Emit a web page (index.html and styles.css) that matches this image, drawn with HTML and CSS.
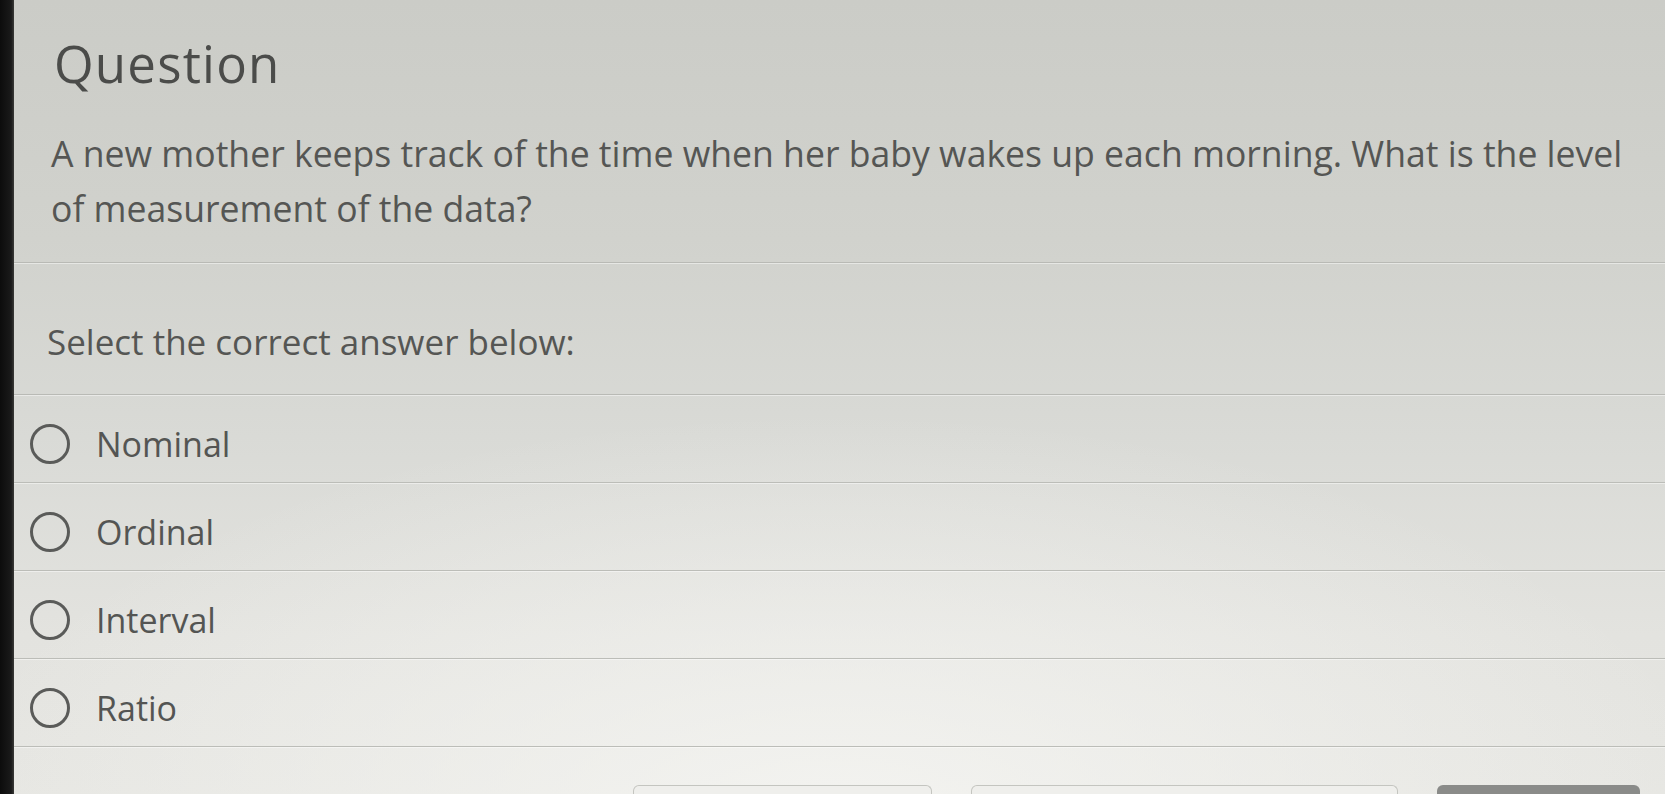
FILE: index.html
```html
<!DOCTYPE html>
<html lang="en">
<head>
<meta charset="utf-8">
<title>Question</title>
<link rel="stylesheet" href="styles.css">
</head>
<body>
<div class="screen">
  <div class="bezel"></div>
  <main class="page">
    <header class="q-head">
      <h1 class="title">Question</h1>
      <p class="prompt">A new mother keeps track of the time when her baby wakes up each morning. What is the level of measurement of the data?</p>
    </header>
    <div class="instr">Select the correct answer below:</div>
    <ul class="options">
      <li class="option"><span class="radio"></span><span class="label">Nominal</span></li>
      <li class="option"><span class="radio"></span><span class="label">Ordinal</span></li>
      <li class="option"><span class="radio"></span><span class="label">Interval</span></li>
      <li class="option"><span class="radio"></span><span class="label">Ratio</span></li>
    </ul>
    <div class="actions">
      <div class="btn btn-light btn-a"></div>
      <div class="btn btn-light btn-b"></div>
      <div class="btn btn-dark btn-c"></div>
    </div>
  </main>
</div>
</body>
</html>
```
FILE: styles.css
```css
html, body {
  margin: 0;
  padding: 0;
  height: 794px;
  overflow: hidden;
}
body {
  font-family: "Open Sans", "Noto Sans", "Liberation Sans", sans-serif;
  color: #555654;
  background: #d6d7d2;
}
.screen {
  display: flex;
  height: 794px;
  background:
    radial-gradient(ellipse 900px 420px at 50% 105%, rgba(245,245,242,0.9), rgba(245,245,242,0) 100%),
    linear-gradient(180deg, #cbccc7 0%, #d1d2cd 30%, #d9dad6 55%, #e3e3df 80%, #e6e6e2 100%);
}
.bezel {
  width: 14px;
  flex: 0 0 14px;
  background: linear-gradient(90deg, #0c0c0c 0%, #1a1a1a 80%, #3a3a38 100%);
}
.page {
  flex: 1;
  min-width: 0;
}
.q-head {
  padding: 33px 20px 26px 37px;
  border-bottom: 1px solid #b9bab5;
  box-shadow: 0 1px 0 rgba(255,255,255,0.45);
}
.title {
  margin: 0 0 0 3px;
  font-size: 51px;
  line-height: 60px;
  font-weight: 400;
  letter-spacing: 1.2px;
  color: #4b4c4a;
}
.prompt {
  margin: 33px 0 0 0;
  font-size: 35.6px;
  line-height: 55px;
  color: #555654;
}
.instr {
  padding: 51px 20px 25px 33px;
  font-size: 35px;
  line-height: 55px;
  border-bottom: 1px solid #b9bab5;
  box-shadow: 0 1px 0 rgba(255,255,255,0.45);
}
.options {
  list-style: none;
  margin: 0;
  padding: 0;
}
.option {
  box-sizing: border-box;
  height: 88px;
  padding: 10px 0 0 16px;
  display: flex;
  align-items: center;
  border-bottom: 1px solid #bcbdb8;
  box-shadow: 0 1px 0 rgba(255,255,255,0.45);
}
.radio {
  box-sizing: border-box;
  width: 40px;
  height: 40px;
  flex: 0 0 40px;
  border: 3px solid #5a5b59;
  border-radius: 50%;
  margin-right: 26px;
}
.label {
  font-size: 34px;
  line-height: 44px;
  color: #545553;
}
.actions {
  display: flex;
  gap: 39px;
  padding: 38px 0 0 619px;
}
.btn {
  box-sizing: border-box;
  height: 40px;
  border-radius: 6px 6px 0 0;
}
.btn-light {
  background: #efefec;
  border: 1px solid #c4c5c0;
  border-bottom: none;
}
.btn-dark {
  background: #8a8b89;
}
.btn-a { width: 299px; }
.btn-b { width: 427px; }
.btn-c { width: 203px; }
```
